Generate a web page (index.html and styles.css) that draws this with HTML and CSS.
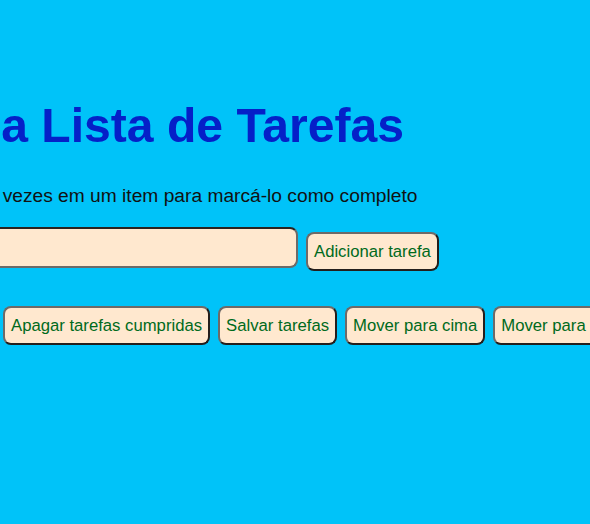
FILE: index.html
```html
<!DOCTYPE html>
<html lang="pt">
<head>
<meta charset="utf-8">
<title>Minha Lista de Tarefas</title>
<link rel="stylesheet" href="styles.css">
</head>
<body>
<main class="page">
  <h1 class="title">Minha Lista de Tarefas</h1>
  <p class="hint">Clique duas vezes em um item para marcá-lo como completo</p>
  <div class="add-row">
    <input class="task-input" type="text">
    <button class="btn btn-add">Adicionar tarefa</button>
  </div>
  <div class="actions">
    <button class="btn">Apagar tarefas cumpridas</button>
    <button class="btn">Salvar tarefas</button>
    <button class="btn">Mover para cima</button>
    <button class="btn">Mover para baixo</button>
  </div>
</main>
</body>
</html>
```

FILE: styles.css
```css
html, body {
  margin: 0;
  padding: 0;
  background: #00c3f9;
  overflow: hidden;
}
body {
  font-family: "Liberation Sans", Arial, sans-serif;
  width: 590px;
  height: 524px;
}
.page {
  display: flex;
  flex-direction: column;
  align-items: flex-start;
  padding-top: 98px;
}
.title {
  margin: 0 0 0 -111px;
  font-size: 48.1px;
  font-weight: bold;
  line-height: 55px;
  color: #0520c8;
  white-space: nowrap;
}
.hint {
  margin: 32px 0 0 -104px;
  font-size: 19.2px;
  line-height: 22px;
  color: #111;
  white-space: nowrap;
}
.add-row {
  display: flex;
  align-items: flex-start;
  gap: 8px;
  margin-top: 20px;
  margin-left: -20px;
}
.task-input {
  box-sizing: border-box;
  width: 318px;
  height: 41px;
  margin: 0;
  border: 2px solid;
  border-color: #2a2220 #6e6a68 #6e6a68 #2a2220;
  border-radius: 8px;
  background: #ffe8cf;
  font: 16.7px "Liberation Sans", Arial, sans-serif;
}
.btn {
  box-sizing: border-box;
  height: 39px;
  margin: 0;
  padding: 0 6px;
  border: 2px solid;
  border-color: #6e6a68 #241e1c #241e1c #6e6a68;
  border-radius: 8px;
  background: #ffe8cf;
  color: #006a1c;
  font: 16.7px "Liberation Sans", Arial, sans-serif;
  line-height: 19px;
  white-space: nowrap;
  flex: none;
}
.btn-add {
  margin-top: 5px;
}
.actions {
  display: flex;
  gap: 8px;
  margin-top: 35px;
  padding-left: 3px;
}
```
